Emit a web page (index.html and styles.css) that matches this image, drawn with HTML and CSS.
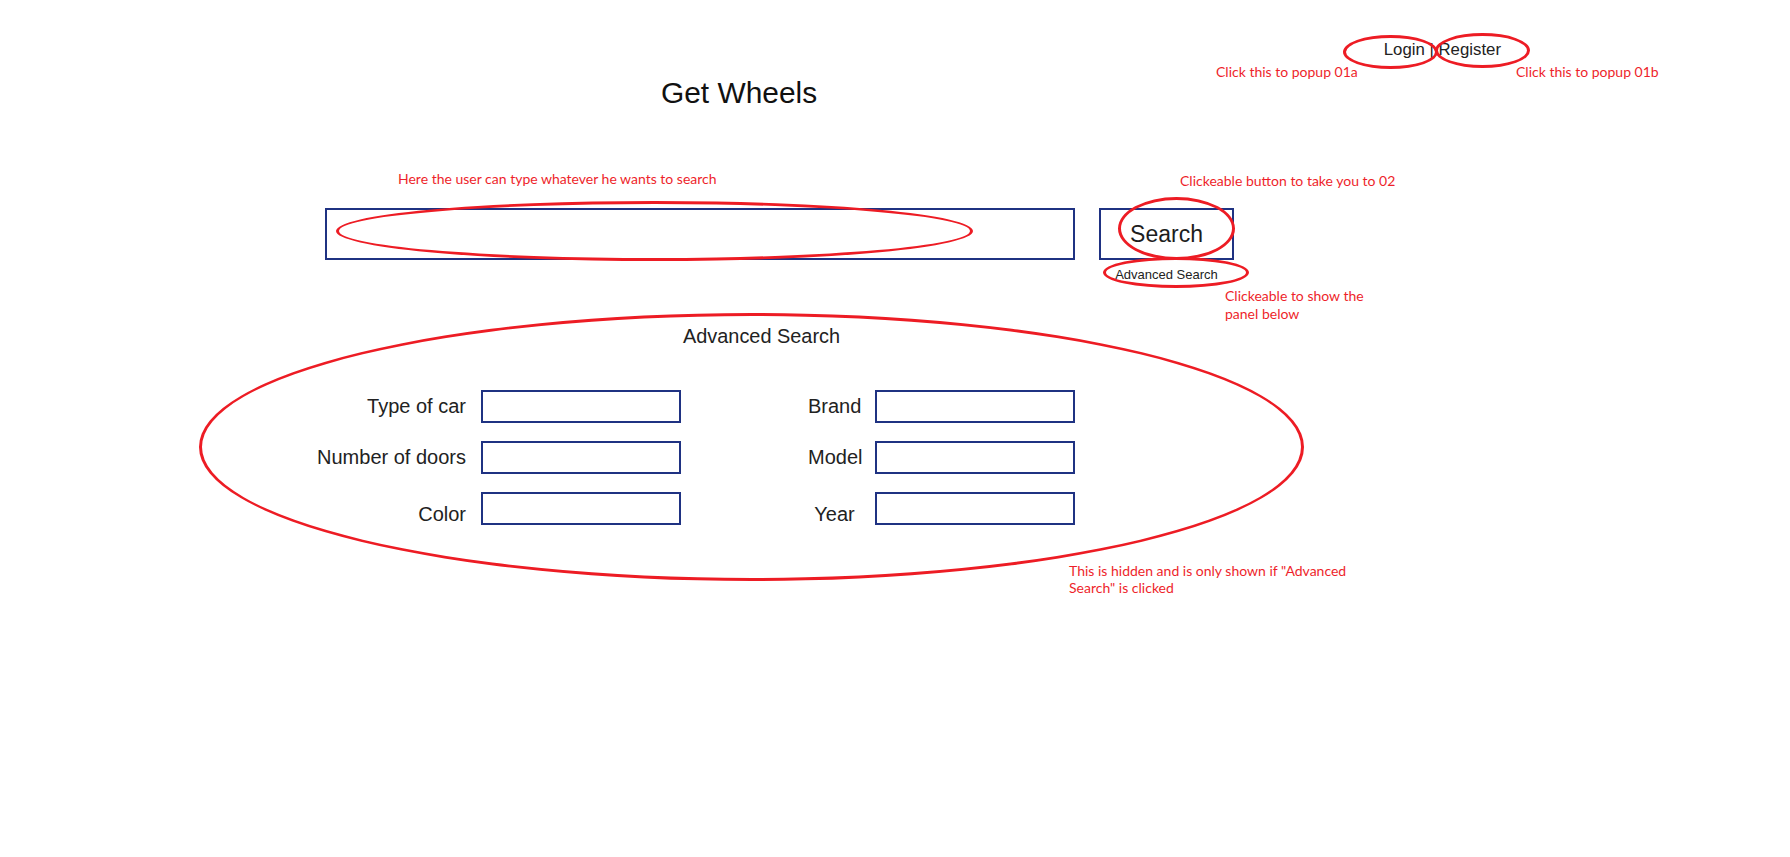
FILE: index.html
```html
<!DOCTYPE html>
<html lang="en">
<head>
<meta charset="utf-8">
<title>Get Wheels</title>
<link rel="stylesheet" href="styles.css">
</head>
<body>
<div class="page">
  <header class="top">
    <nav class="auth"><a class="auth-link" href="#">Login</a> | <a class="auth-link" href="#">Register</a></nav>
  </header>

  <h1 class="title">Get Wheels</h1>

  <div class="search-row">
    <input class="search-input" type="text" aria-label="Search">
    <div class="search-col">
      <button class="search-btn" type="button">Search</button>
      <a class="adv-link" href="#">Advanced Search</a>
    </div>
  </div>

  <section class="adv-panel">
    <h2 class="adv-title">Advanced Search</h2>
    <div class="fields">
      <div class="group group-left">
        <label class="lbl">Type of car</label><input class="box" type="text">
        <label class="lbl">Number of doors</label><input class="box" type="text">
        <label class="lbl low">Color</label><input class="box" type="text">
      </div>
      <div class="group group-right">
        <label class="lbl">Brand</label><input class="box" type="text">
        <label class="lbl">Model</label><input class="box" type="text">
        <label class="lbl low">Year</label><input class="box" type="text">
      </div>
    </div>
  </section>

  <div class="notes">
    <span class="ring ring-login"></span>
    <span class="ring ring-register"></span>
    <span class="ring ring-input"></span>
    <span class="ring ring-search"></span>
    <span class="ring ring-adv"></span>
    <span class="ring ring-panel"></span>

    <p class="note note-01a">Click this to popup 01a</p>
    <p class="note note-01b">Click this to popup 01b</p>
    <p class="note note-type">Here the user can type whatever he wants to search</p>
    <p class="note note-btn">Clickeable button to take you to 02</p>
    <p class="note note-show">Clickeable to show the<br>panel below</p>
    <p class="note note-hidden">This is hidden and is only shown if "Advanced<br>Search" is clicked</p>
  </div>
</div>
</body>
</html>
```
FILE: styles.css
```css
* { box-sizing: border-box; }

html, body {
  margin: 0;
  padding: 0;
  background: #ffffff;
}

body {
  font-family: "Liberation Sans", Arial, sans-serif;
  color: #222222;
}

.page {
  position: relative;
  width: 1790px;
  height: 857px;
  overflow: hidden;
}

/* top bar */
.top {
  display: flex;
  justify-content: flex-end;
  padding: 40px 289px 0 0;
}

.auth {
  font-size: 16.8px;
  line-height: 20px;
  color: #222222;
  white-space: pre;
}

.auth-link {
  color: #222222;
  text-decoration: none;
}

/* title */
.title {
  margin: 16px 0 0 661px;
  font-size: 29.9px;
  line-height: 34px;
  font-weight: normal;
  color: #111111;
}

/* search row */
.search-row {
  display: flex;
  align-items: flex-start;
  gap: 24px;
  margin: 98px 0 0 325px;
}

.search-input {
  width: 750px;
  height: 52px;
  border: 2px solid #1f3282;
  background: #ffffff;
  margin: 0;
  padding: 0 10px;
  outline: none;
}

.search-col {
  display: flex;
  flex-direction: column;
  align-items: center;
}

.search-btn {
  width: 135px;
  height: 52px;
  margin: 0;
  padding: 0;
  border: 2px solid #1f3282;
  background: #ffffff;
  font-family: "Liberation Sans", Arial, sans-serif;
  font-size: 23px;
  color: #1d1d1d;
  display: flex;
  align-items: center;
  justify-content: center;
}

.adv-link {
  margin-top: 7px;
  font-size: 13px;
  line-height: 16px;
  color: #222222;
  text-decoration: none;
}

/* advanced panel */
.adv-panel {
  margin: 42px 0 0 0;
}

.adv-title {
  margin: 0 0 0 683px;
  font-size: 19.9px;
  line-height: 23px;
  font-weight: normal;
  color: #222222;
}

.fields {
  display: flex;
  gap: 127px;
  margin: 42px 0 0 306px;
}

.group {
  display: grid;
  grid-template-rows: repeat(3, 33px);
  row-gap: 18px;
  align-items: center;
}

.group-left {
  grid-template-columns: 160px 200px;
  column-gap: 15px;
}

.group-left .lbl {
  text-align: right;
}

.group-right {
  grid-template-columns: 53px 200px;
  column-gap: 14px;
}

.group-right .lbl {
  text-align: center;
}

.lbl {
  font-size: 20px;
  line-height: 23px;
  color: #222222;
  white-space: nowrap;
}

.lbl.low {
  padding-top: 12px;
}

.box {
  width: 200px;
  height: 33px;
  margin: 0;
  border: 2px solid #1f3282;
  background: #ffffff;
  outline: none;
}

/* annotation layer */
.notes {
  position: absolute;
  inset: 0;
  pointer-events: none;
}

.ring {
  position: absolute;
  display: block;
  border: 3px solid #ed1c24;
  border-radius: 50%;
}

.ring-login    { left: 1343px; top: 35px;  width: 95px;  height: 34px; }
.ring-register { left: 1435px; top: 33px;  width: 95px;  height: 35px; }
.ring-input    { left: 336px;  top: 201px; width: 637px; height: 60px; }
.ring-search   { left: 1118px; top: 197px; width: 117px; height: 63px; }
.ring-adv      { left: 1103px; top: 257px; width: 146px; height: 31px; }
.ring-panel    { left: 199px;  top: 313px; width: 1105px; height: 268px; }

.note {
  position: absolute;
  margin: 0;
  font-family: Lato, "Open Sans", sans-serif;
  font-size: 14px;
  line-height: 17px;
  color: #ee1f2b;
  white-space: nowrap;
}

.note-01a    { left: 1216px; top: 63px; }
.note-01b    { left: 1516px; top: 63px; }
.note-type   { left: 398px;  top: 170px; }
.note-btn    { left: 1180px; top: 172px; }
.note-show   { left: 1225px; top: 287px; line-height: 17.5px; }
.note-hidden { left: 1069px; top: 562px; }
```
